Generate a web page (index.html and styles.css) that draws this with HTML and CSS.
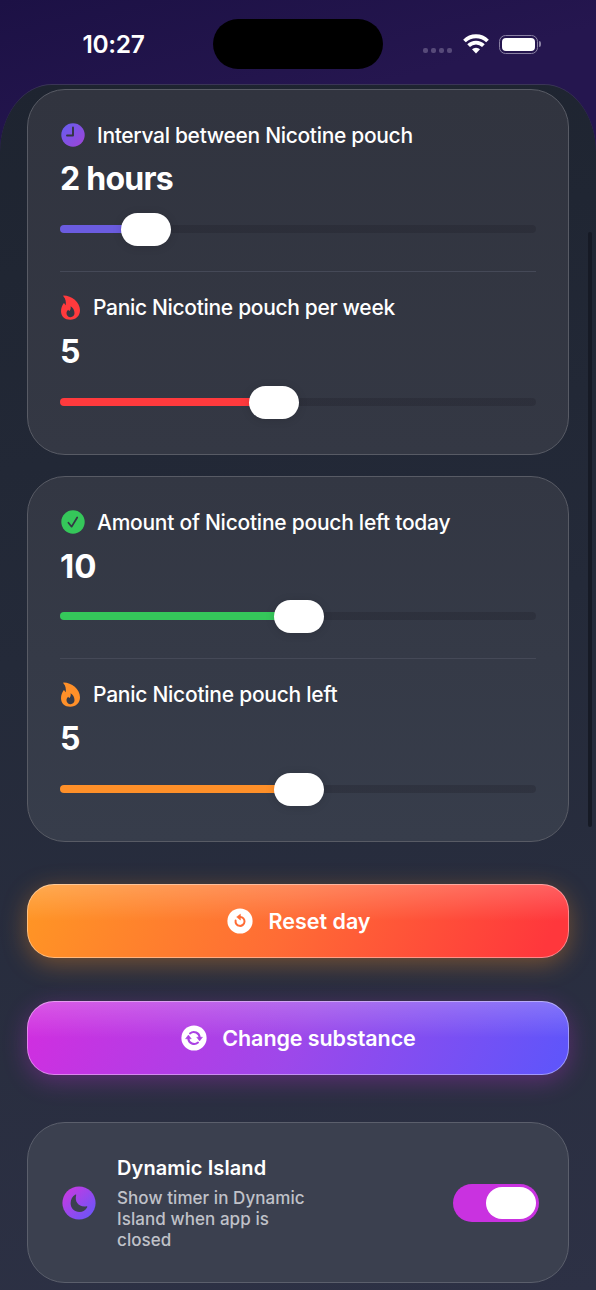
FILE: index.html
```html
<!DOCTYPE html>
<html lang="en">
<head>
    <meta charset="UTF-8">
    <meta name="viewport" content="width=device-width, initial-scale=1.0">
    <title>Settings</title>
    <link rel="stylesheet" href="styles.css">
</head>

<body>

    <!-- gradients and shapes shared by the icons -->
    <svg class="defs" width="0" height="0">
        <defs>
            <linearGradient id="grad-clock" x1="0" y1="0" x2="1" y2="1">
                <stop offset="0.1" stop-color="#6a5cee" />
                <stop offset="1" stop-color="#a043d6" />
            </linearGradient>
            <linearGradient id="grad-moon" x1="0" y1="0" x2="1" y2="1">
                <stop offset="0.1" stop-color="#c63ae2" />
                <stop offset="1" stop-color="#6058fa" />
            </linearGradient>
            <symbol id="flame" viewBox="0 0 20 25">
                <path fill-rule="evenodd" d="M3.2.5C11 .7 19.5 7 19.5 15.2c0 5.6-4 9.5-9.7 9.5C4.3 24.7.5 21.2.5 16.200c0-3.200 1.200-5.700 2.300-7.400.4-.6 1.200-.6 1.500.1.2.5.5.9.9 1.300C5.700 6.700 5.100 3.700 3 1.400 2.600.9 2.700.5 3.200.5zM10.100 11.200c.5 2.800-.3 3.900-1.200 4.700-.6-.2-.9-.6-1.200-1.100-1 .9-1.700 2.100-1.700 3.500 0 2.400 1.700 3.900 4 3.900s4-1.600 4-3.900c0-3.200-1.600-5.700-3.900-7.100z" />
            </symbol>
        </defs>
    </svg>

    <header class="status-bar">
        <div class="time">10:27</div>
        <div class="island"></div>
        <div class="status-icons">
            <div class="dots"><i></i><i></i><i></i><i></i></div>
            <svg class="wifi" width="26" height="20" viewBox="0 0 26 20">
                <g fill="none" stroke="#fff" stroke-width="3.8">
                    <path d="M1.500 7a16.300 16.300 0 0 1 23 0" />
                    <path d="M5.600 11.700a10.400 10.400 0 0 1 14.800 0" />
                </g>
                <path fill="#fff" d="M13 19.400l-4-4.100a5.700 5.700 0 0 1 8 0z" />
            </svg>
            <div class="battery"></div>
        </div>
    </header>

    <main class="sheet">
        <section class="card">
            <div class="setting">
                <div class="label">
                    <svg width="25" height="24" viewBox="0 0 25 24">
                        <circle cx="13" cy="12" r="11.700" fill="url(#grad-clock)" />
                        <path d="M13 4.500v8H7" fill="none" stroke="#333642" stroke-width="1.900" stroke-linecap="round" stroke-linejoin="round" />
                    </svg>
                    <span>Interval between Nicotine pouch</span>
                </div>
                <div class="value hours">2 hours</div>
                <div class="slider violet" style="--fill: 86px"><div class="thumb"></div></div>
            </div>
            <div class="setting">
                <div class="label red">
                    <svg width="21" height="25"><use href="#flame" /></svg>
                    <span>Panic Nicotine pouch per week</span>
                </div>
                <div class="value">5</div>
                <div class="slider red" style="--fill: 214px"><div class="thumb"></div></div>
            </div>
        </section>

        <section class="card">
            <div class="setting">
                <div class="label wide">
                    <svg width="25" height="24" viewBox="0 0 25 24">
                        <circle cx="13" cy="12" r="11.700" fill="#35c75a" />
                        <path d="M8.400 12.700l3.200 4 5.600-9.200" fill="none" stroke="#333744" stroke-width="1.700" stroke-linecap="round" stroke-linejoin="round" />
                    </svg>
                    <span>Amount of Nicotine pouch left today</span>
                </div>
                <div class="value ten">10</div>
                <div class="slider green" style="--fill: 239px"><div class="thumb"></div></div>
            </div>
            <div class="setting">
                <div class="label wide orange">
                    <svg width="21" height="25"><use href="#flame" /></svg>
                    <span>Panic Nicotine pouch left</span>
                </div>
                <div class="value">5</div>
                <div class="slider orange" style="--fill: 239px"><div class="thumb"></div></div>
            </div>
        </section>

        <button class="action reset">
            <svg width="26" height="26" viewBox="0 0 26 26">
                <circle cx="13" cy="13" r="12.600" fill="#fff" />
                <path d="M8.600 12.600a4.500 4.500 0 1 0 4.600-3.700" fill="none" stroke="#ff6c35" stroke-width="2" stroke-linecap="round" />
                <path d="M13.400 6.200v5.800L9.700 9z" fill="#ff6c35" stroke="#ff6c35" stroke-width=".6" stroke-linejoin="round" />
            </svg>
            <span>Reset day</span>
        </button>

        <button class="action change">
            <svg width="26" height="26" viewBox="0 0 26 26">
                <circle cx="13" cy="13" r="12.600" fill="#fff" />
                <g fill="none" stroke="#ab42e4" stroke-width="2" stroke-linecap="round">
                    <path d="M9 8.400a5.900 5.900 0 0 1 9.700 4.200" />
                    <path d="M17 17.600a5.900 5.900 0 0 1-9.700-4.200" />
                </g>
                <path d="M15.700 12.200h5.800l-2.900 3.700zM10.300 13.800H4.500l2.900-3.700z" fill="#ab42e4" stroke="#ab42e4" stroke-width=".5" stroke-linejoin="round" />
            </svg>
            <span>Change substance</span>
        </button>

        <section class="card island-card">
            <svg width="34" height="34" viewBox="0 0 34 34">
                <circle cx="17" cy="17" r="16.600" fill="url(#grad-moon)" />
                <path d="M14.200 9c-1.900 7 2.800 12.600 10.300 11.300.6-.1 1 .3.700.9-1.500 3.100-4.400 4.800-7.700 4.800-5 0-8.900-3.800-8.900-8.700 0-3.800 1.900-7.100 4.900-8.800.5-.3.900 0 .7.500z" fill="#3b404f" />
            </svg>
            <div class="island-text">
                <h2>Dynamic Island</h2>
                <p>Show timer in Dynamic Island when app is closed</p>
            </div>
            <div class="toggle"><div class="knob"></div></div>
        </section>
    </main>

    <div class="scrollbar"></div>

</body>

</html>
```

FILE: styles.css
```css
* {
    box-sizing: border-box;
}

body {
    margin: 0;
    width: 596px;
    height: 1290px;
    overflow: hidden;
    font-family: Inter, "Liberation Sans", sans-serif;
    color: #fff;
    background: linear-gradient(165deg, #1c1145 0, #25164f 180px);
}

.defs {
    position: absolute;
}

/* status bar */
.status-bar {
    display: grid;
    grid-template-columns: 213px 170px 213px;
    height: 84px;
    padding-top: 19px;
}

.time {
    padding-left: 14px;
    line-height: 51px;
    font-size: 24.5px;
    font-weight: 600;
    letter-spacing: -0.3px;
    text-align: center;
}

.island {
    height: 50px;
    border-radius: 25px;
    background: #000;
}

.status-icons {
    display: flex;
    align-items: center;
    height: 50px;
    padding-left: 40px;
}

.dots {
    display: flex;
    gap: 3px;
    padding-top: 13px;
}

.dots i {
    width: 5px;
    height: 5px;
    border-radius: 2px;
    background: #574a79;
}

.wifi {
    margin: 0 10px 0 10.5px;
}

.battery {
    position: relative;
    width: 39px;
    height: 19px;
    padding: 2px;
    border: 1px solid #8a81a3;
    border-radius: 6.5px;
}

.battery::before {
    content: "";
    display: block;
    height: 13px;
    border-radius: 4px;
    background: #fff;
}

.battery::after {
    content: "";
    position: absolute;
    top: 5.5px;
    right: -4px;
    width: 2px;
    height: 6px;
    border-radius: 0 2px 2px 0;
    background: #8a81a3;
}

/* sheet */
.sheet {
    height: 1206px;
    padding: 4px 27px 0;
    border-top: 1px solid #3a3556;
    border-radius: 52px 52px 0 0 / 68px 68px 0 0;
    background: linear-gradient(172deg, #1e2430 0, #242a39 45%, #2d3145 100%);
}

.card {
    height: 366px;
    margin-bottom: 21px;
    padding: 32px 32px 0;
    border: 1px solid #585b65;
    border-radius: 38px;
    background: linear-gradient(180deg, #31343f, #343844);
}

.card + .card {
    margin-bottom: 42px;
    background: linear-gradient(180deg, #333743, #373d4b);
}

.setting + .setting {
    margin-top: 25px;
    padding-top: 22px;
    border-top: 1px solid #454957;
}

.label {
    display: flex;
    align-items: center;
    gap: 12px;
    height: 26px;
    font-size: 21px;
    font-weight: 500;
    letter-spacing: -0.32px;
    white-space: nowrap;
}

.label.wide {
    letter-spacing: -0.25px;
}

.value {
    height: 40px;
    margin-top: 10px;
    line-height: 42px;
    font-size: 32px;
    font-weight: 700;
}

.setting + .setting .value {
    margin-top: 11px;
}

.value.hours {
    letter-spacing: -0.75px;
}

.value.ten {
    font-size: 33px;
}

.slider {
    position: relative;
    display: flex;
    align-items: center;
    height: 33px;
    margin-top: 15px;
}

.slider::before {
    content: "";
    flex: 1;
    height: 8px;
    margin-bottom: 1px;
    border-radius: 4px;
    background: linear-gradient(90deg, currentColor var(--fill), rgba(30, 30, 40, 0.3) var(--fill));
}

.thumb {
    position: absolute;
    left: calc(var(--fill) - 25px);
    width: 50px;
    height: 33px;
    border-radius: 16.5px;
    background: #fff;
    box-shadow: 0 1px 10px rgba(0, 0, 0, 0.12);
}

.slider.violet { color: #6b5ce0; }
.slider.red { color: #ff3a3d; }
.slider.green { color: #35c75a; }
.slider.orange { color: #ff9029; }

.label.red svg { fill: #ff3a3d; }
.label.orange svg { fill: #ff9029; }

/* buttons */
.action {
    display: flex;
    align-items: center;
    justify-content: center;
    gap: 15px;
    width: 542px;
    height: 74px;
    padding: 0 0 0 2px;
    border: 1px solid rgba(255, 255, 255, 0.4);
    border-radius: 27px;
    color: #fff;
    font-family: inherit;
    font-size: 21.5px;
    font-weight: 600;
}

.reset {
    margin-bottom: 43px;
    background: linear-gradient(180deg, rgba(255, 255, 255, 0.2), rgba(255, 255, 255, 0) 50%) border-box,
        linear-gradient(115deg, #ff9425 3%, #ff6c35 48%, #ff373c 95%) border-box;
    box-shadow: 0 6px 24px rgba(255, 144, 30, 0.36);
}

.change {
    margin-bottom: 47px;
    padding-left: 1px;
    background: linear-gradient(180deg, rgba(255, 255, 255, 0.2), rgba(255, 255, 255, 0) 50%) border-box,
        linear-gradient(115deg, #cf2fe0 3%, #9d48ea 50%, #6055fa 97%) border-box;
    box-shadow: 0 6px 24px rgba(203, 48, 224, 0.32);
    letter-spacing: -0.08px;
}

/* dynamic island */
.island-card {
    display: flex;
    align-items: center;
    height: 161px;
    padding: 0 29px 0 34px;
    border-color: #5b5f6c;
    background: #3b404f;
}

.card.island-card {
    background: #3b404f;
}

.island-text {
    width: 200px;
    margin: 0 auto 0 21px;
}

.island-text h2 {
    margin: 0 0 6px;
    padding-top: 1px;
    font-size: 20px;
    line-height: 26px;
    font-weight: 600;
    letter-spacing: 0.1px;
}

.island-text p {
    margin: 0;
    font-size: 17px;
    line-height: 21.3px;
    font-weight: 500;
    letter-spacing: 0.07px;
    color: #c0c2c9;
    padding-top: 1px;
}

.toggle {
    width: 86px;
    height: 38px;
    padding: 3px;
    border-radius: 19px;
    background: #c932e0;
}

.knob {
    width: 50px;
    height: 32px;
    margin-left: auto;
    border-radius: 16px;
    background: #fff;
}

.scrollbar {
    position: absolute;
    top: 232px;
    left: 588px;
    width: 4px;
    height: 595px;
    border-radius: 2px;
    background: #161a25;
}
```
